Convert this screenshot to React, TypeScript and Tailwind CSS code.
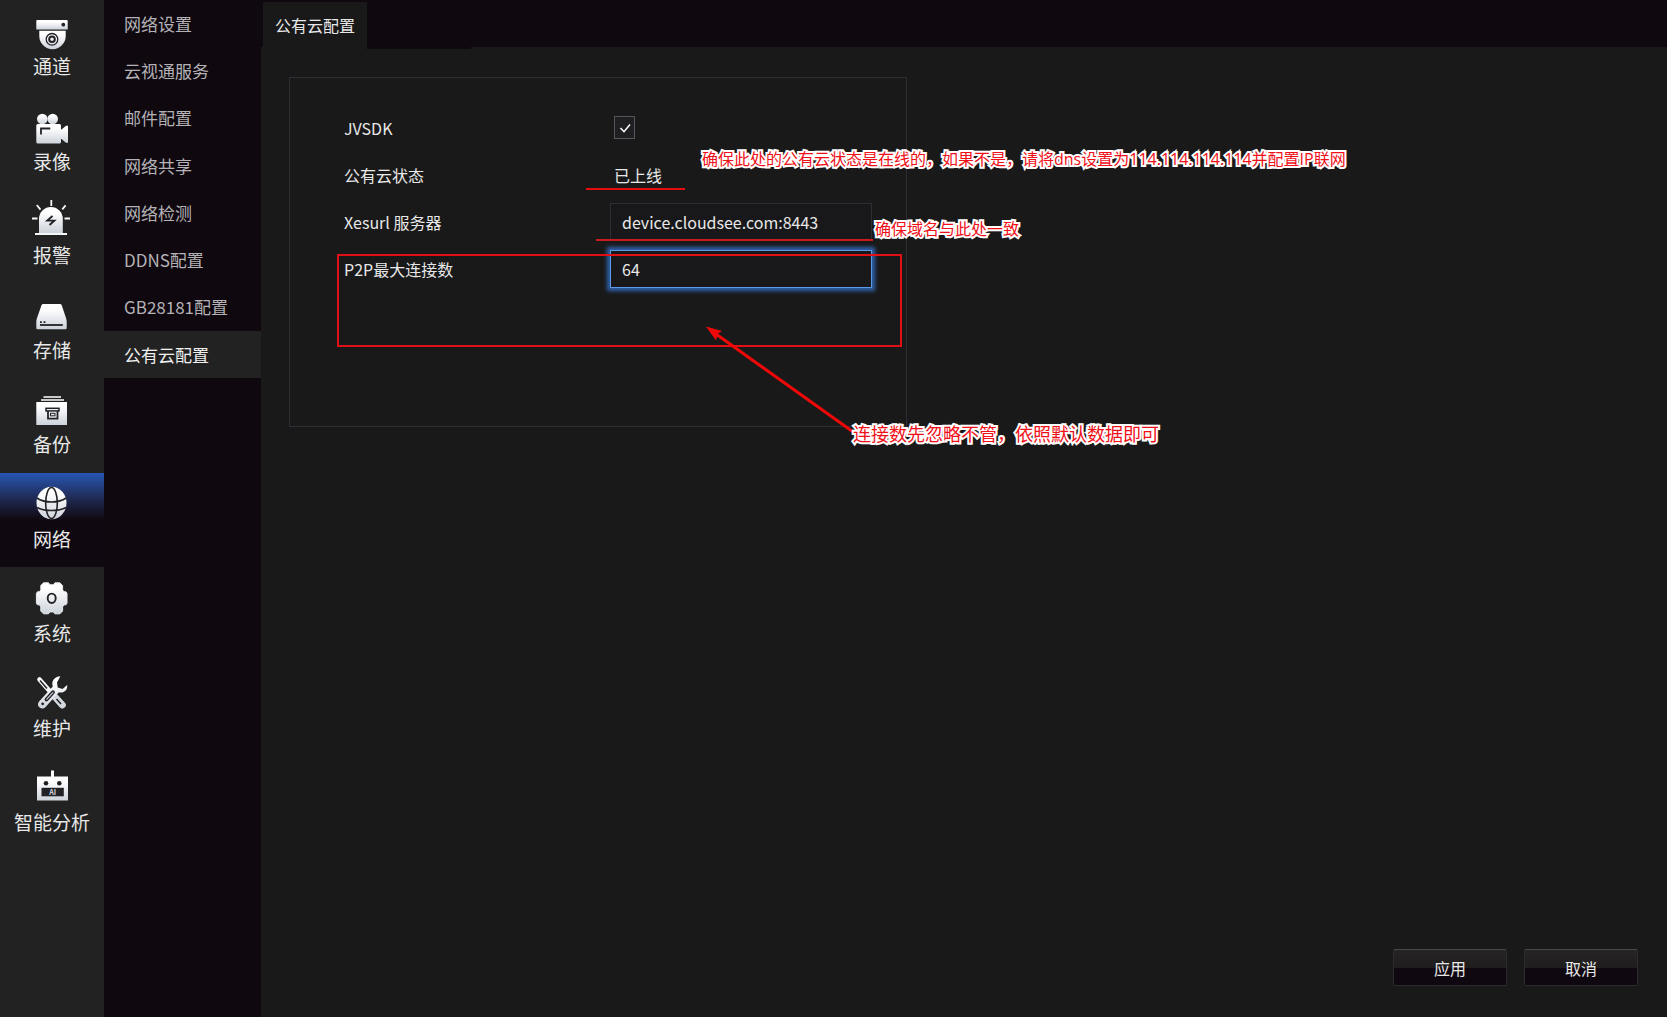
import { useState } from "react";
import type { ReactNode } from "react";

const DARK = "#222226";
const FILL = "url(#iconFill)";

const DomeIcon = () => (
  <>
    <path d="M5.3 12h29.4a1 1 0 0 1 1 1v8.5H4.3V13a1 1 0 0 1 1-1Z" fill={FILL} />
    <circle cx="31.3" cy="16.7" r="1.9" fill={DARK} />
    <path d="M7.3 22.7h26.4V28a13.2 13.2 0 0 1-26.4 0Z" fill={FILL} />
    <circle cx="20" cy="31.3" r="5.8" fill="none" stroke={DARK} strokeWidth="1.3" />
    <circle cx="20" cy="31.3" r="2.8" fill="none" stroke={DARK} strokeWidth="2" />
  </>
);

const CameraIcon = () => (
  <>
    <circle cx="10.3" cy="16" r="5.3" fill={FILL} />
    <circle cx="20.7" cy="16" r="5.3" fill={FILL} />
    <rect x="4.3" y="21" width="24.7" height="19.6" rx="1.5" fill={FILL} />
    <path d="M28.5 26.5h1l4.5-3.7h2v17h-2l-4.500-3.700h-1Z" fill={FILL} />
    <path d="M9 31.5v-6h9.3" fill="none" stroke={DARK} strokeWidth="1.8" />
  </>
);

const AlarmIcon = () => (
  <>
    <path d="M7 36v-14a11.9 11.9 0 0 1 23.8 0v14Z" fill={FILL} />
    <path
      d="M3 37h32M19.3 3v6M4.8 8l3.7 4.6M33.6 8.4l-3.3 4M0 21.5h5.5M32.5 21.5H38"
      fill="none"
      stroke="#f4f6f8"
      strokeWidth="1.8"
    />
    <path d="m20.5 19-5.2 4.6h7L17.5 28" fill="none" stroke={DARK} strokeWidth="1.9" />
  </>
);

const DiskIcon = () => (
  <>
    <path
      d="M11.5 12h16.2c1 0 1.6.5 2 1.3L34 26c.5 1.5.7 3 .7 4.5V36a1.3 1.3 0 0 1-1.3 1.3H5.6A1.3 1.3 0 0 1 4.3 36v-5.5c0-1.5.2-3 .7-4.5l4.5-12.7c.4-.8 1-1.3 2-1.3Z"
      fill={FILL}
    />
    <path d="M8 33h22.8" stroke={DARK} strokeWidth="1.8" />
    <path d="M8 30.2h1.8M11.6 30.2h1.8" stroke={DARK} strokeWidth="1.8" />
  </>
);

const BackupIcon = () => (
  <>
    <path d="M11.5 11h17.5M9 14h23" stroke="#fff" strokeWidth="1.5" />
    <rect x="4.3" y="16" width="30.7" height="23" fill={FILL} />
    <rect x="14" y="22.3" width="13" height="2.6" fill="none" stroke={DARK} strokeWidth="1.5" />
    <path d="M16 25v7.700h9.500V25" fill="none" stroke={DARK} strokeWidth="1.8" />
    <rect x="18.5" y="27.3" width="4.500" height="2.500" fill="none" stroke={DARK} strokeWidth="1" />
  </>
);

const GlobeIcon = () => (
  <>
    <ellipse cx="19.5" cy="22" rx="15" ry="16.3" fill={FILL} />
    <ellipse cx="19.5" cy="22" rx="5.8" ry="15.5" fill="none" stroke={DARK} strokeWidth="1.6" />
    <path d="M5 17c7 5.3 22 5.3 29 0M5 26.5c7 4 22 4 29 0" fill="none" stroke={DARK} strokeWidth="1.6" />
  </>
);

const GearIcon = () => (
  <>
    <path
      d="M11.500 7.800h5l1.400 1.900h3.600l1.400-1.900h5l2.700 2.800v4.200l1.400 2h2l1 1.700v9.600l-1 1.700h-2l-1.400 2V36l-2.700 2.800h-5l-1.400-1.900h-3.600l-1.400 1.900h-5L8.800 36v-4.200l-1.400-2h-2l-1-1.700v-9.600l1-1.700h2l1.400-2v-4.200Z"
      fill={FILL}
      stroke="#e8ebef"
      strokeWidth="1"
      strokeLinejoin="round"
    />
    <ellipse cx="19.7" cy="23.3" rx="4" ry="4.7" fill="none" stroke={DARK} strokeWidth="1.9" />
  </>
);

const ToolsIcon = () => (
  <>
    <path d="m7.500 9.500 11 12.500" stroke="#fafbfc" strokeWidth="4.600" strokeLinecap="round" />
    <path d="m24 28 6.300 7" stroke="#d3d8df" strokeWidth="7" strokeLinecap="round" />
    <path d="m8 10.500 7 8M24.500 29l4.500 5" stroke={DARK} strokeWidth="1.500" />
    <path
      d="M28.3 6.200c-5.800.2-9.300 5-7.500 10.300L7.300 31.200c-4 4.600 2.200 10 6.300 5.700l13.300-14.600c4.500 1.300 9-2 8.300-7.300l-4.600 4-4.900-1.500-.7-5Z"
      fill={FILL}
    />
    <path d="m14.500 29.500 6.500-7.200" stroke={DARK} strokeWidth="3.800" strokeLinecap="round" />
    <path d="m14.800 29.200 6-6.600" stroke="#c9ced6" strokeWidth="1.200" strokeLinecap="round" />
    <circle cx="10.700" cy="33.800" r="1.400" fill={DARK} />
  </>
);

const RobotIcon = () => (
  <>
    <rect x="19" y="6.500" width="3" height="7" fill="#fff" />
    <rect x="5" y="12.500" width="31" height="24" fill={FILL} />
    <circle cx="14" cy="19.200" r="2.300" fill={DARK} />
    <circle cx="27.300" cy="19.200" r="2.300" fill={DARK} />
    <rect x="9.500" y="23.800" width="22.300" height="8.500" fill={DARK} />
    <text x="20.600" y="30.500" fill="#d8dce2" fontSize="7" fontWeight="bold" textAnchor="middle">
      AI
    </text>
  </>
);

const mainMenu: { name: string; icon: ReactNode }[] = [
  { name: "通道", icon: <DomeIcon /> },
  { name: "录像", icon: <CameraIcon /> },
  { name: "报警", icon: <AlarmIcon /> },
  { name: "存储", icon: <DiskIcon /> },
  { name: "备份", icon: <BackupIcon /> },
  { name: "网络", icon: <GlobeIcon /> },
  { name: "系统", icon: <GearIcon /> },
  { name: "维护", icon: <ToolsIcon /> },
  { name: "智能分析", icon: <RobotIcon /> },
];

const subMenu = [
  "网络设置",
  "云视通服务",
  "邮件配置",
  "网络共享",
  "网络检测",
  "DDNS配置",
  "GB28181配置",
  "公有云配置",
];

const Note = ({ className, children }: { className: string; children: ReactNode }) => (
  <p
    className={`absolute whitespace-nowrap font-['Open_Sans','Noto_Sans_CJK_SC',sans-serif] leading-6 text-[#f01018] [-webkit-text-stroke:4px_white] [paint-order:stroke_fill] ${className}`}
  >
    {children}
  </p>
);

const App = () => {
  const [active, setActive] = useState("网络");
  const [activeSub, setActiveSub] = useState("公有云配置");
  const [enabled, setEnabled] = useState(true);
  const [server, setServer] = useState("device.cloudsee.com:8443");
  const [maxLinks, setMaxLinks] = useState("64");

  return (
    <div className="flex min-h-screen bg-[#191919] font-['Noto_Sans_CJK_SC',sans-serif] text-[#e8e8e8]">
      <svg className="absolute size-0" aria-hidden="true">
        <defs>
          <linearGradient id="iconFill" x1="0" y1="0" x2="0" y2="1">
            <stop offset="0.2" stopColor="#ffffff" />
            <stop offset="1" stopColor="#cdd3db" />
          </linearGradient>
        </defs>
      </svg>

      {/* Main menu */}
      <nav className="w-26 shrink-0 bg-[#222222]">
        <div className="grid h-[851px] auto-rows-fr">
          {mainMenu.map((item) => (
            <button
              key={item.name}
              type="button"
              onClick={() => setActive(item.name)}
              className={`flex flex-col items-center pt-2 ${
                active === item.name
                  ? "bg-linear-to-b from-[#2657b4] via-[#100810] via-50% to-[#100810]"
                  : ""
              }`}
            >
              <svg className="h-11 w-10 shrink-0" viewBox="0 0 40 44" aria-hidden="true">
                {item.icon}
              </svg>
              <span className="text-[19px] leading-7">{item.name}</span>
            </button>
          ))}
        </div>
      </nav>

      {/* Sub menu */}
      <nav className="w-[157px] shrink-0 bg-[#0f080f]">
        <div className="grid h-[378px] auto-rows-fr">
          {subMenu.map((name) => (
            <button
              key={name}
              type="button"
              onClick={() => setActiveSub(name)}
              className={`pl-5 text-left text-[17px] ${
                activeSub === name ? "bg-[#222222] text-[#f0f0f0]" : "text-[#b4b2b6]"
              }`}
            >
              {name}
            </button>
          ))}
        </div>
      </nav>

      <main className="flex min-w-0 flex-1 flex-col">
        {/* Tabs */}
        <div className="flex h-[47px] items-start bg-[#0f080f] pt-0.5 pl-0.5">
          <button type="button" className="h-[45px] w-26 bg-[#191919] text-[16px]">
            公有云配置
          </button>
          <div className="h-[47px] w-26 bg-[#0f080f]" />
        </div>

        {/* Settings */}
        <form className="relative mt-[30px] ml-7 h-[350px] w-full max-w-[618px] border border-[#302c36] pt-[26px] pl-[54px] text-[16px]">
          <div className="flex h-[47px] items-center">
            <label htmlFor="jvsdk" className="w-[266px]">
              JVSDK
            </label>
            <span className="relative ml-1 h-[23px] w-[21px]">
              <input
                id="jvsdk"
                type="checkbox"
                checked={enabled}
                onChange={(e) => setEnabled(e.target.checked)}
                className="block h-full w-full appearance-none border border-[#55555c] bg-[#1f1f22]"
              />
              {enabled && (
                <svg className="pointer-events-none absolute inset-0" viewBox="0 0 21 23" aria-hidden="true">
                  <path d="m6.5 12 3.5 3.700 6-7.200" fill="none" stroke="#fff" strokeWidth="1.5" />
                </svg>
              )}
            </span>
          </div>
          <div className="flex h-[47px] items-center">
            <span className="w-[266px]">公有云状态</span>
            <span className="ml-1">已上线</span>
          </div>
          <div className="flex h-[47px] items-center">
            <label htmlFor="server" className="w-[266px]">
              Xesurl 服务器
            </label>
            <input
              id="server"
              type="text"
              value={server}
              onChange={(e) => setServer(e.target.value)}
              className="h-[38px] w-[262px] border border-[#302c36] bg-[#18181a] px-[11px] outline-none"
            />
          </div>
          <div className="flex h-[47px] items-center">
            <label htmlFor="maxLinks" className="w-[266px]">
              P2P最大连接数
            </label>
            <input
              id="maxLinks"
              type="text"
              value={maxLinks}
              onChange={(e) => setMaxLinks(e.target.value)}
              className="h-[38px] w-[262px] border border-[#5c9ae8] bg-[#18181a] px-[11px] shadow-[0_0_4px_3px_#2f62ab] outline-none"
            />
          </div>

          {/* Hints drawn over the form */}
          <div className="absolute top-[110px] left-[296px] h-0.5 w-[99px] bg-[#e60c10]" />
          <div className="absolute top-[161px] left-[306px] h-0.5 w-[277px] bg-[#c81c20]" />
          <div className="pointer-events-none absolute top-[176px] left-[47px] h-[93px] w-[565px] border-2 border-[#e01014]" />
          <svg
            className="pointer-events-none absolute top-[240px] left-[408px] h-[120px] w-[160px]"
            viewBox="0 0 160 120"
            aria-hidden="true"
          >
            <path d="M18 16 158 116" stroke="#f00808" strokeWidth="3" />
            <path d="m8 8.500 16 4.500-4.500 3-1.500 6.500Z" fill="#f00808" />
          </svg>
          <Note className="top-[69px] left-[412px] text-[16px]">
            确保此处的公有云状态是在线的，如果不是，请将dns设置为114.114.114.114并配置IP联网
          </Note>
          <Note className="top-[139px] left-[585px] text-[16px]">确保域名与此处一致</Note>
          <Note className="top-[344px] left-[563px] text-[18px]">
            连接数先忽略不管，依照默认数据即可
          </Note>
        </form>

        {/* Footer buttons */}
        <div className="mt-auto flex justify-end gap-[17px] pr-[29px] pb-[31px]">
          {["应用", "取消"].map((text) => (
            <button
              key={text}
              type="button"
              className="h-[37px] w-[114px] rounded-xs border border-[#2e2b2f] border-t-[#4a484b] bg-[linear-gradient(#262424,#1f1d1e_50%,#100810_52%,#100810)] text-[16px]"
            >
              {text}
            </button>
          ))}
        </div>
      </main>
    </div>
  );
};

export default App;
